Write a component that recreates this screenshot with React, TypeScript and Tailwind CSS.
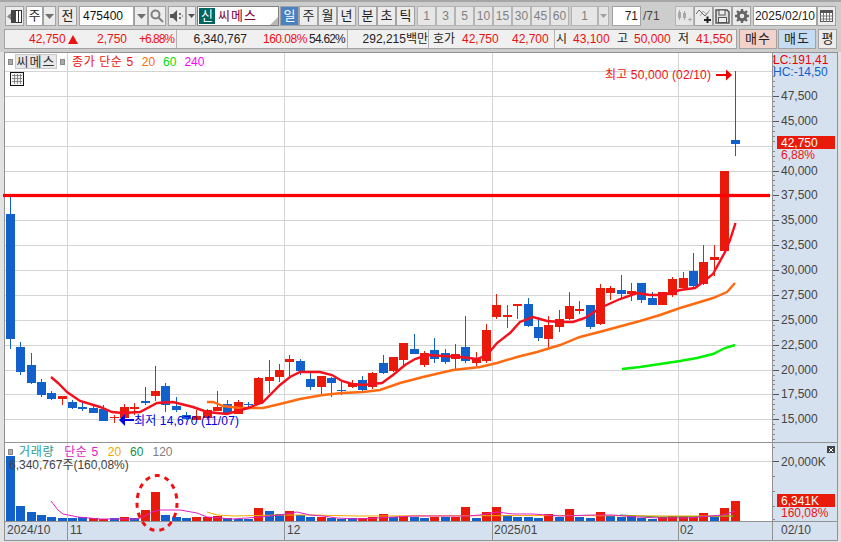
import React from "react";

type C = [string, number, number, number, number];
const candles: C[] = [
  ["b",214,339,197,349],["b",347,372,342,375],["b",365,383,353,384],["b",382,395,379,397],["b",393,399,391,400],
  ["r",396,399,396,405],["b",402,408,400,409],["b",407,409,402,411],["b",408,413,405,413],["b",409,421,405,421],
  ["r",417,418,415,423],["r",407,418,404,418],["r",407,409,403,415],["b",401,403,387,405],["r",391,396,366,401],
  ["b",386,405,383,412],["b",406,410,397,412],["b",415,419,412,420],["r",416,420,410,420],["r",410,418,409,420],
  ["r",407,411,391,411],["b",404,414,400,415],["r",402,414,400,414],["b",404,405,402,409],["r",378,404,377,405],
  ["r",377,381,360,393],["r",370,377,364,382],["r",359,362,355,376],["b",361,371,359,375],["b",379,387,372,390],
  ["r",376,387,376,394],["b",378,383,377,397],["b",390,391,382,395],["r",383,387,380,388],["b",380,390,376,392],
  ["r",373,387,372,389],["b",363,373,355,374],["r",357,371,357,372],["r",343,360,343,367],["b",349,354,334,354],
  ["r",353,365,351,367],["b",350,359,338,363],["b",353,362,349,364],["r",354,359,344,369],["b",347,361,316,363],
  ["r",358,363,352,366],["r",330,361,324,363],["r",305,317,294,319],["r",315,317,305,328],["r",304,306,304,319],
  ["b",304,326,298,327],["b",327,338,317,341],["r",325,339,316,349],["r",319,327,310,332],["r",306,319,292,320],
  ["r",309,311,301,314],["b",305,327,305,329],["r",288,324,284,325],["r",288,293,286,300],["b",290,294,275,298],
  ["r",291,294,283,301],["b",283,300,283,303],["b",298,305,292,305],["r",292,305,292,305],["r",279,295,277,297],
  ["r",278,288,272,290],["b",271,286,253,287],["r",262,284,245,285],["r",257,260,245,276],["r",171,251,171,251],
  ["b",140,144,71,156],
];
const vols: [string, number][] = [
  ["b",456],["b",506],["b",512],["b",515],["b",517],["b",518],["b",518],["b",517],["r",518],["r",519],
  ["b",518],["r",517],["b",518],["r",510],["r",492],["b",515],["b",517],["b",518],["r",517],["r",517],
  ["r",516],["b",518],["b",519],["b",519],["r",508],["b",511],["b",514],["r",511],["b",515],["b",517],
  ["r",517],["b",518],["b",519],["b",518],["r",518],["r",517],["r",514],["b",517],["r",516],["b",517],
  ["b",518],["r",517],["b",517],["r",517],["r",507],["b",518],["r",512],["r",507],["b",515],["b",517],
  ["b",517],["b",518],["r",514],["b",517],["r",509],["b",517],["b",518],["r",512],["b",516],["b",517],
  ["b",516],["b",518],["b",519],["r",517],["r",516],["r",516],["r",517],["r",513],["b",517],["r",508],["r",501],
];
const cx = (i: number) => Math.floor(10.5 + 10.35 * i);
const col = (c: string) => (c === "b" ? "#1160cc" : "#ea1a0a");

const ma5 = "51,377 58,383 67,392 80,401 100,407 112,412 123,413 140,412 157,403 173,402 193,407 207,412 227,414 248,408 263,402 280,385 290,377 300,372 320,372 332,375 342,381 352,384 363,385 382,383 393,375 405,365 415,359 427,355 460,357 477,359 487,355 497,343 510,333 520,322 533,317 547,321 560,322 573,322 585,318 600,308 620,299 637,293 650,295 663,295 680,290 695,288 703,282 713,274 725,252 730,240 735.5,223";
const ma20 = "207,402 213,402 223,406 240,408 263,408 280,404 300,399 323,395 342,393 363,392 380,390 400,383 423,377 453,370 480,367 497,363 517,357 537,352 560,345 580,337 603,331 640,321 660,315 680,308 700,302 713,298 727,292 735,283";
const ma60 = "622,369 640,367 660,364 680,361 697,358 713,354 725,348 735,345";
const vma5 = "51,501 58,510 63,514 78,517 100,519 137,519 143,517 152,512 160,510 180,510 197,513 207,517 233,519 260,517 280,515 297,512 310,515 323,516 337,518 357,519 377,518 413,516 467,516 480,515 497,512 513,514 533,514 560,516 593,515 613,515 637,517 660,518 687,518 710,516 723,515 735,511";
const vma20 = "207,512 217,515 233,516 280,515 313,515 357,516 560,515.5 670,516 733,516";
const vma60 = "620,515 660,517 735,516";

const priceY = (p: number) => Math.round(71 + (50000 - p) * 0.009952);
const majors = [50000,47500,45000,42500,40000,37500,35000,32500,30000,27500,25000,22500,20000,17500,15000];
const labels: [string, number][] = [["47,500",47500],["45,000",45000],["40,000",40000],["37,500",37500],["35,000",35000],["32,500",32500],["30,000",30000],["27,500",27500],["25,000",25000],["22,500",22500],["20,000",20000],["17,500",17500],["15,000",15000]];
const minors: number[] = [];
for (let p = 52000; p >= 13000; p -= 500) if (p % 2500 !== 0) minors.push(priceY(p));
const vgrid = [67, 284, 492, 678];

const Tri = () => (
  <svg width="9" height="5" viewBox="0 0 9 5"><polygon points="0,0 9,0 4.5,5" fill="#707070" /></svg>
);

function Btn({ className, children }: { className: string; children?: React.ReactNode }) {
  return <div className={"flex items-center justify-center border border-[#a2a2a2] bg-[#ececec] text-[13px] text-[#222] h-[20px] shrink-0 " + className}>{children}</div>;
}
function Num({ className, children }: { className: string; children: React.ReactNode }) {
  return <div className={"flex items-center justify-center border border-[#b4b4b4] bg-[#e6e6e6] text-[12px] text-[#808080] h-[20px] shrink-0 " + className}>{children}</div>;
}
function Cell({ className, children }: { className: string; children: React.ReactNode }) {
  return <span className={"whitespace-nowrap text-right shrink-0 " + className}>{children}</span>;
}

export default function App() {
  return (
    <div className="w-[841px] h-[542px] overflow-hidden flex flex-col bg-[#cdcdcd] border-t-2 border-[#a6a6a6] font-['Liberation_Sans','Noto_Sans_CJK_KR',sans-serif] text-[12px] text-[#222]">
      {/* toolbar */}
      <div className="flex h-[20px] mt-[4px] ml-[5px] shrink-0">
        <Btn className="w-[19px]">
          <svg width="15" height="13" viewBox="0 0 15 13"><rect x="4.5" y="0.5" width="10" height="12" fill="#fff" stroke="#333" /><rect x="4" y="0" width="5" height="13" fill="#444" /><rect x="11" y="1" width="1" height="11" fill="#333" /><polygon points="0,6.5 4,3 4,10" fill="#888" /></svg>
        </Btn>
        <div className="ml-[2px] w-[17px] h-[20px] border border-[#a2a2a2] bg-white flex items-center justify-center text-[13px]">주</div>
        <Btn className="w-[13px] ml-[0px]"><Tri /></Btn>
        <Btn className="w-[19px] ml-[2px]">전</Btn>
        <div className="ml-[2px] w-[55px] h-[20px] border border-[#a2a2a2] bg-white flex items-center pl-[3px] text-[12px] text-[#111]">475400</div>
        <Btn className="w-[14px]"><Tri /></Btn>
        <Btn className="w-[18px]">
          <svg width="14" height="14" viewBox="0 0 14 14" fill="none" stroke="#808080" strokeWidth="2"><circle cx="5.5" cy="5.5" r="4" /><line x1="8.5" y1="8.5" x2="13" y2="13" /></svg>
        </Btn>
        <Btn className="w-[18px] ml-[2px]">
          <svg width="14" height="12" viewBox="0 0 14 12"><polygon points="0,4 3,4 7,0 7,12 3,8 0,8" fill="#555" /><rect x="9" y="3" width="2" height="2" fill="#777" /><rect x="9" y="7" width="2" height="2" fill="#777" /><rect x="12" y="5" width="1" height="2" fill="#999" /></svg>
        </Btn>
        <Btn className="w-[10px]"><svg width="7" height="4" viewBox="0 0 7 4"><polygon points="0,0 7,0 3.5,4" fill="#555" /></svg></Btn>
        <div className="relative ml-[1px] w-[82px] h-[20px] border border-[#808080] bg-white flex items-center pl-[1px]">
          <span className="w-[16px] h-[16px] bg-[#00665f] text-white flex items-center justify-center text-[13px]">신</span>
          <span className="ml-[3px] text-[13px] text-[#7a0040] tracking-[1px]">씨메스</span>
          <svg className="absolute right-0 bottom-0" width="8" height="8" viewBox="0 0 8 8"><polygon points="8,0 8,8 0,8" fill="#b8b8b8" /></svg>
        </div>
        <div className="ml-[1px] w-[19px] h-[20px] shrink-0 flex items-center justify-center border border-[#a2a2a2] bg-[#4a80c4] text-white text-[13px]">일</div>
        <Btn className="w-[19px]">주</Btn>
        <Btn className="w-[19px]">월</Btn>
        <Btn className="w-[19px]">년</Btn>
        <Btn className="w-[19px] ml-[2px]">분</Btn>
        <Btn className="w-[19px]">초</Btn>
        <Btn className="w-[19px]">틱</Btn>
        <Num className="w-[19px] ml-[2px]">1</Num>
        <Num className="w-[19px]">3</Num>
        <Num className="w-[19px]">5</Num>
        <Num className="w-[19px]">10</Num>
        <Num className="w-[19px]">15</Num>
        <Num className="w-[19px]">30</Num>
        <Num className="w-[19px]">45</Num>
        <Num className="w-[19px]">60</Num>
        <Num className="w-[27px] ml-[2px]">1</Num>
        <Num className="w-[11px]"><svg width="7" height="4" viewBox="0 0 7 4"><polygon points="0,0 7,0 3.5,4" fill="#a0a0a0" /></svg></Num>
        <div className="ml-[3px] w-[29px] h-[20px] border border-[#a2a2a2] bg-white flex items-center justify-end pr-[2px] text-[12px]">71</div>
        <span className="ml-[2px] w-[32px] flex items-center text-[12px] text-[#444]">/71</span>
        <Num className="w-[19px]">
          <svg width="15" height="13" viewBox="0 0 15 13"><rect x="1" y="2" width="3" height="6" fill="#a8a8a8" /><rect x="2" y="0" width="1" height="10" fill="#a8a8a8" /><rect x="6" y="3" width="3" height="5" fill="#a8a8a8" /><rect x="7" y="1" width="1" height="9" fill="#a8a8a8" /><rect x="11" y="9" width="4" height="1" fill="#a8a8a8" /><rect x="12.5" y="7.5" width="1" height="4" fill="#a8a8a8" /></svg>
        </Num>
        <Btn className="w-[19px]">
          <svg width="16" height="14" viewBox="0 0 16 14"><polyline points="0,5 3,1 6,4 9,7 13,2" fill="none" stroke="#666" /><polyline points="4,7 7,2 10,5 14,1" fill="none" stroke="#aaa" /><rect x="8" y="10" width="7" height="2" fill="#222" /><rect x="10.5" y="7.5" width="2" height="7" fill="#222" /></svg>
        </Btn>
        <Btn className="w-[19px]">
          <svg width="15" height="15" viewBox="0 0 15 15"><path d="M1 1H12L14 3V14H1Z" fill="#ddd" stroke="#555" strokeWidth="1.5" /><rect x="4" y="1" width="6" height="5" fill="#eee" stroke="#555" /><rect x="3.5" y="8.5" width="8" height="5" fill="#eee" stroke="#555" /></svg>
        </Btn>
        <Btn className="w-[19px]">
          <svg width="14" height="14" viewBox="0 0 14 14"><circle cx="7" cy="7" r="3.8" fill="none" stroke="#666" strokeWidth="3" /><g stroke="#666" strokeWidth="2.4"><line x1="7" y1="0" x2="7" y2="14" strokeDasharray="2.5 9" /><line x1="0" y1="7" x2="14" y2="7" strokeDasharray="2.5 9" /><line x1="2" y1="2" x2="12" y2="12" strokeDasharray="2.5 9.2" /><line x1="12" y1="2" x2="2" y2="12" strokeDasharray="2.5 9.2" /></g></svg>
        </Btn>
        <div className="ml-[2px] w-[64px] h-[20px] border border-[#a2a2a2] bg-white flex items-center justify-end pr-[1px] text-[12px] whitespace-nowrap">2025/02/10</div>
        <Btn className="w-[19px]">
          <svg width="13" height="12" viewBox="0 0 13 12"><rect x="0.5" y="0.5" width="12" height="11" fill="#fff" stroke="#555" /><rect x="0" y="0" width="13" height="3" fill="#555" /><path d="M0 6H13M0 9H13M3.5 3V12M6.5 3V12M9.5 3V12" stroke="#777" /></svg>
        </Btn>
      </div>

      {/* quote row */}
      <div className="flex h-[20px] mt-[3px] ml-[4px] shrink-0">
        <div className="w-[733px] h-[20px] bg-[#f0f0f0] border border-[#a2a2a2] flex items-center leading-[18px]">
          <div className="w-[172px] h-full flex items-center border-r border-[#b4b4b4] text-[#ee1111]">
            <Cell className="ml-[24px] w-[35px]">42,750</Cell>
            <span className="ml-[4px] w-[10px] h-[10px] flex items-center">
              <svg width="10" height="9" viewBox="0 0 10 9"><polygon points="5,0 10,9 0,9" fill="#ee1111" /></svg>
            </span>
            <Cell className="ml-[19px] w-[30px]">2,750</Cell>
            <Cell className="ml-[11px] w-[36px] tracking-[-1px]">+6.88%</Cell>
          </div>
          <div className="w-[171px] h-full flex items-center border-r border-[#b4b4b4]">
            <Cell className="ml-[16px] w-[54px]">6,340,767</Cell>
            <Cell className="ml-[16px] w-[41px] text-[#ee1111] tracking-[-0.5px]">160.08%</Cell>
            <Cell className="ml-[5px] w-[36px] tracking-[-0.8px]">54.62%</Cell>
          </div>
          <div className="w-[81px] h-full flex items-center border-r border-[#b4b4b4]">
            <Cell className="ml-[14px] w-[66px]">292,215백만</Cell>
          </div>
          <div className="w-[126px] h-full flex items-center border-r border-[#b4b4b4]">
            <Cell className="ml-[2px] w-[24px]">호가</Cell>
            <Cell className="ml-[7px] w-[36px] text-[#ee1111]">42,750</Cell>
            <Cell className="ml-[14px] w-[36px] text-[#ee1111]">42,700</Cell>
          </div>
          <div className="flex-1 h-full flex items-center">
            <Cell className="ml-[1px] w-[11px]">시</Cell>
            <Cell className="ml-[6px] w-[36px] text-[#ee1111]">43,100</Cell>
            <Cell className="ml-[7px] w-[12px]">고</Cell>
            <Cell className="ml-[6px] w-[36px] text-[#ee1111]">50,000</Cell>
            <Cell className="ml-[7px] w-[12px]">저</Cell>
            <Cell className="ml-[7px] w-[36px] text-[#ee1111]">41,550</Cell>
          </div>
        </div>
        <div className="ml-[2px] w-[38px] h-[20px] border border-[#a2a2a2] bg-[#f2d2ca] flex items-center justify-center text-[13px] tracking-[1px]">매수</div>
        <div className="ml-[1px] w-[38px] h-[20px] border border-[#a2a2a2] bg-[#c6dcf2] flex items-center justify-center text-[13px] tracking-[1px]">매도</div>
        <Btn className="ml-[2px] w-[19px]">평</Btn>
      </div>

      {/* chart frame */}
      <div className="flex-1 mt-[3px] bg-[#e2e2e2] pl-[4px] min-h-0">
        <div className="w-[834px] h-[489px] border border-[#929292] bg-white flex flex-col">
          {/* price pane */}
          <div className="relative flex h-[389px] border-b-0">
            <svg className="block overflow-visible" width="767" height="389" viewBox="5 53 767 389">
              <g shapeRendering="crispEdges">
                {majors.map((p) => <rect key={p} x="5" y={priceY(p)} width="767" height="1" fill="#d4d4d4" />)}
                {vgrid.map((x) => <rect key={x} x={x} y="53" width="1" height="389" fill="#d4d4d4" />)}
              </g>
              <g shapeRendering="crispEdges">
                {candles.map((c, i) => (
                  <g key={i} fill={col(c[0])}>
                    <rect x={cx(i)} y={c[3]} width="1" height={c[4] - c[3]} />
                    <rect x={cx(i) - 4} y={c[1]} width="9" height={Math.max(c[2] - c[1], 1)} />
                  </g>
                ))}
              </g>
              <polyline points={ma60} fill="none" stroke="#00f000" strokeWidth="2.4" />
              <polyline points={ma20} fill="none" stroke="#ff6a10" strokeWidth="2.4" />
              <polyline points={ma5} fill="none" stroke="#f4101c" strokeWidth="2.4" />
              <rect x="3" y="193.5" width="767" height="4" fill="#ff0000" opacity="0.25" />
              <rect x="3" y="194" width="767" height="3" fill="#ff0000" />
              <text x="605" y="79" fill="#ee1111" fontSize="12" letterSpacing="0.15">최고 50,000 (02/10)</text>
              <rect x="716" y="74" width="10" height="2" fill="#ee0000" />
              <polygon points="726,69.5 732,75 726,80.5" fill="#ee0000" />
              <rect x="125" y="419" width="9" height="2" fill="#0000e0" />
              <polygon points="125,414 119,420 125,426" fill="#0000e0" />
              <text x="134" y="424.5" fill="#0000e0" fontSize="12" letterSpacing="0.15">최저 14,670 (11/07)</text>
            </svg>
            <div className="absolute left-[3px] top-[1px] flex items-center h-[15px]">
              <span className="w-[5px] h-[6px] bg-[#aaa] border border-[#888]" />
              <span className="ml-[2px] w-[42px] h-[15px] bg-[#e8e8e8] border border-[#c8c8c8] flex items-center justify-center text-[13px] text-[#333] tracking-[1px]">씨메스</span>
              <span className="ml-[3px] w-[5px] h-[6px] bg-[#aaa] border border-[#888]" />
              <span className="ml-[7px] text-[#ee1111] whitespace-nowrap tracking-[0.6px]">종가 단순 5</span>
              <span className="ml-[8px] text-[#ff6a10]">20</span>
              <span className="ml-[8px] text-[#00e000]">60</span>
              <span className="ml-[8px] text-[#ff00ff]">240</span>
            </div>
            <svg className="absolute left-[5px] top-[19px]" width="14" height="14" viewBox="0 0 14 14">
              <rect x="0.5" y="0.5" width="13" height="13" fill="#f4f4f4" stroke="#111" />
              <path d="M2 3.5H12M2 6.5H12M2 9.5H12M4.5 2V12M7.5 2V12M10.5 2V12" stroke="#888" />
            </svg>
            <div className="w-[1px] bg-[#929292]" />
            <div className="w-[64px] bg-[#d6e1ef]">
              <svg className="block" width="64" height="389" viewBox="773 53 64 389">
                <g shapeRendering="crispEdges" fill="#555">
                  {minors.filter((y) => y > 53 && y < 441).map((y, i) => <rect key={i} x="773" y={y} width="2" height="1" fill="#888" />)}
                  {majors.filter((p) => p !== 42500 && p !== 50000).map((p) => <rect key={p} x="773" y={priceY(p)} width="6" height="1" />)}
                </g>
                <text x="773" y="64" fill="#ee0000" fontSize="12">LC:191,41</text>
                <text x="773" y="76" fill="#1060d0" fontSize="12">HC:-14,50</text>
                {labels.map(([t, p]) => <text key={t} x="781" y={priceY(p) + 4} fill="#444" fontSize="12">{t}</text>)}
                <rect x="777" y="136" width="58" height="13" fill="#ea1a0a" shapeRendering="crispEdges" />
                <text x="781" y="147" fill="#fff" fontSize="12">42,750</text>
                <text x="781" y="159" fill="#ee1111" fontSize="12">6,88%</text>
              </svg>
            </div>
          </div>
          <div className="h-[1px] bg-[#929292]" />
          {/* volume pane */}
          <div className="relative z-10 flex h-[78px]">
            <svg className="block overflow-visible" width="767" height="78" viewBox="5 443 767 78">
              <g shapeRendering="crispEdges">
                <rect x="5" y="461" width="767" height="1" fill="#d4d4d4" />
                {vgrid.map((x) => <rect key={x} x={x} y="443" width="1" height="78" fill="#d4d4d4" />)}
                {vols.map(([c, t], i) => <rect key={i} x={cx(i) - 4} y={t} width="9" height={521 - t} fill={col(c)} />)}
              </g>
              <polyline points={vma60} fill="none" stroke="#109040" strokeWidth="1" />
              <polyline points={vma20} fill="none" stroke="#f0a800" strokeWidth="1" />
              <polyline points={vma5} fill="none" stroke="#e020c0" strokeWidth="1" />
              <ellipse cx="157" cy="503" rx="20" ry="27.5" fill="none" stroke="#ee1111" strokeWidth="3" strokeDasharray="5 5" />
            </svg>
            <div className="absolute left-[3px] top-[1px] flex flex-col">
              <div className="flex items-center h-[15px]">
                <span className="w-[5px] h-[6px] bg-[#aaa] border border-[#888]" />
                <span className="ml-[6px] text-[#2a9d8f] whitespace-nowrap tracking-[0.7px]">거래량</span>
                <span className="ml-[10px] text-[#e020c0] whitespace-nowrap tracking-[0.6px]">단순 5</span>
                <span className="ml-[9px] text-[#f0a800]">20</span>
                <span className="ml-[9px] text-[#109040]">60</span>
                <span className="ml-[9px] text-[#808080]">120</span>
              </div>
              <span className="ml-[1px] h-[13px] leading-[13px] text-[#444] whitespace-nowrap">6,340,767주(160,08%)</span>
            </div>
            <div className="w-[1px] bg-[#929292]" />
            <div className="relative w-[64px] bg-[#d6e1ef]">
              <svg className="block" width="64" height="78" viewBox="773 443 64 78">
                <g shapeRendering="crispEdges" fill="#888">
                  {[447, 476, 491, 506, 519].map((y) => <rect key={y} x="773" y={y} width="2" height="1" />)}
                  <rect x="773" y="461" width="6" height="1" fill="#555" />
                </g>
                <text x="781" y="466" fill="#444" fontSize="12">20,000K</text>
                <rect x="777" y="494" width="58" height="13" fill="#ea1a0a" shapeRendering="crispEdges" />
                <text x="781" y="505" fill="#fff" fontSize="12">6,341K</text>
                <text x="781" y="517" fill="#ee1111" fontSize="12">160,08%</text>
              </svg>
              <div className="absolute right-[2px] top-[3px] w-[8px] h-[7px] bg-[#444] flex items-center justify-center">
                <svg width="4" height="4" viewBox="0 0 4 4"><path d="M0 0L4 4M4 0L0 4" stroke="#fff" /></svg>
              </div>
            </div>
          </div>
          <div className="h-[1px] bg-[#929292]" />
          {/* date axis */}
          <div className="flex h-[18px] bg-[#d6e1ef] text-[#444] leading-[17px]">
            <div className="w-[63px] border-r border-[#929292] pl-[2px]">2024/10</div>
            <div className="w-[217px] border-r border-[#929292] pl-[2px]">11</div>
            <div className="w-[208px] border-r border-[#929292] pl-[2px]">12</div>
            <div className="w-[186px] border-r border-[#929292] pl-[1px]">2025/01</div>
            <div className="w-[94px] border-r border-[#929292] pl-[1px]">02</div>
            <div className="flex-1 pl-[8px]">02/10</div>
          </div>
        </div>
      </div>
    </div>
  );
}
